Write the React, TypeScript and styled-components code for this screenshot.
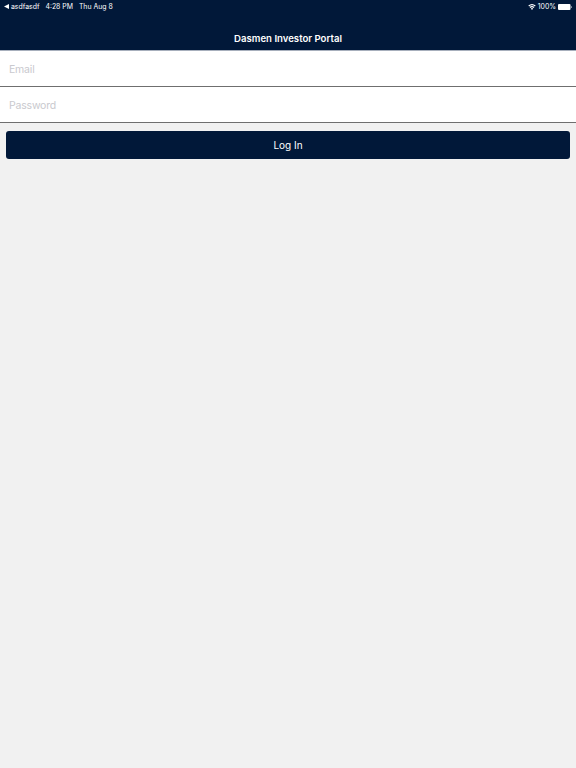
import React from 'react'
import styled, { createGlobalStyle } from 'styled-components'

const GlobalStyle = createGlobalStyle`
  html, body {
    margin: 0;
    padding: 0;
    background-color: #f1f1f1;
    font-family: Inter, "Liberation Sans", sans-serif;
  }
  * {
    box-sizing: border-box;
  }
`

const Page = styled.div`
  width: 576px;
  height: 768px;
  overflow: hidden;
  background-color: #f1f1f1;
`

const Header = styled.header`
  height: 51px;
  background-color: #011839;
  border-bottom: 1px solid #a7afbc;
  display: flex;
  flex-direction: column;
`

const StatusBar = styled.div`
  height: 12px;
  margin-top: 0.5px;
  padding: 0 4px;
  display: flex;
  align-items: center;
  justify-content: space-between;
  color: #fff;
  font-size: 6.9px;
  line-height: 12px;
`

const StatusGroup = styled.div<{ $gap: number }>`
  display: flex;
  align-items: center;
  gap: ${(props) => props.$gap}px;
`

const NavTitle = styled.h1`
  margin: 15.5px 0 0;
  text-align: center;
  color: #fff;
  font-size: 9.6px;
  font-weight: 600;
  line-height: 22px;
`

const Field = styled.input`
  display: block;
  width: 100%;
  height: 36px;
  padding: 1px 9px 0;
  border: 0;
  border-bottom: 1px solid #6f6f6f;
  border-radius: 0;
  outline: none;
  background-color: #fff;
  font-family: inherit;
  font-size: 10.5px;
  letter-spacing: -0.2px;

  &::placeholder {
    color: #c9c9ce;
    opacity: 1;
  }
`

const Form = styled.form`
  display: flex;
  flex-direction: column;
`

const ButtonRow = styled.div`
  padding: 8px 6px 0;
`

const LoginButton = styled.button`
  display: block;
  width: 100%;
  height: 28px;
  border: 0;
  border-radius: 3px;
  background-color: #011839;
  color: #fff;
  font-family: inherit;
  font-size: 10px;
`

const WifiIcon = () => (
  <svg width="8" height="6" viewBox="0 0 18 14" fill="#fff">
    <path d="M9 14 6.2 10.6a4.4 4.4 0 0 1 5.6 0L9 14Z" />
    <path d="M5 9.2 3.3 7.1a9 9 0 0 1 11.4 0L13 9.2a6.3 6.3 0 0 0-8 0Z" />
    <path d="M2.2 5.8.4 3.7a13.4 13.4 0 0 1 17.2 0l-1.8 2.1a10.7 10.7 0 0 0-13.6 0Z" />
  </svg>
)

const BatteryIcon = () => (
  <svg width="14" height="6" viewBox="0 0 14 6">
    <rect x="0" y="0" width="12.5" height="6" rx="1" fill="#fff" />
    <rect x="13" y="2" width="1" height="2" rx="0.5" fill="#8d97a8" />
  </svg>
)

const BackArrow = () => (
  <svg width="5" height="5" viewBox="0 0 5 5" fill="#fff">
    <path d="M5 0v5L0 2.5Z" />
  </svg>
)

const App: React.FC = () => {
  return (
    <Page>
      <GlobalStyle />
      <Header>
        <StatusBar>
          <StatusGroup $gap={6}>
            <StatusGroup $gap={2}>
              <BackArrow />
              <span>asdfasdf</span>
            </StatusGroup>
            <span>4:28 PM</span>
            <span>Thu Aug 8</span>
          </StatusGroup>
          <StatusGroup $gap={2}>
            <WifiIcon />
            <span>100%</span>
            <BatteryIcon />
          </StatusGroup>
        </StatusBar>
        <NavTitle>Dasmen Investor Portal</NavTitle>
      </Header>
      <Form>
        <Field type="email" placeholder="Email" />
        <Field type="password" placeholder="Password" />
        <ButtonRow>
          <LoginButton type="button">Log In</LoginButton>
        </ButtonRow>
      </Form>
    </Page>
  )
}

export default App
